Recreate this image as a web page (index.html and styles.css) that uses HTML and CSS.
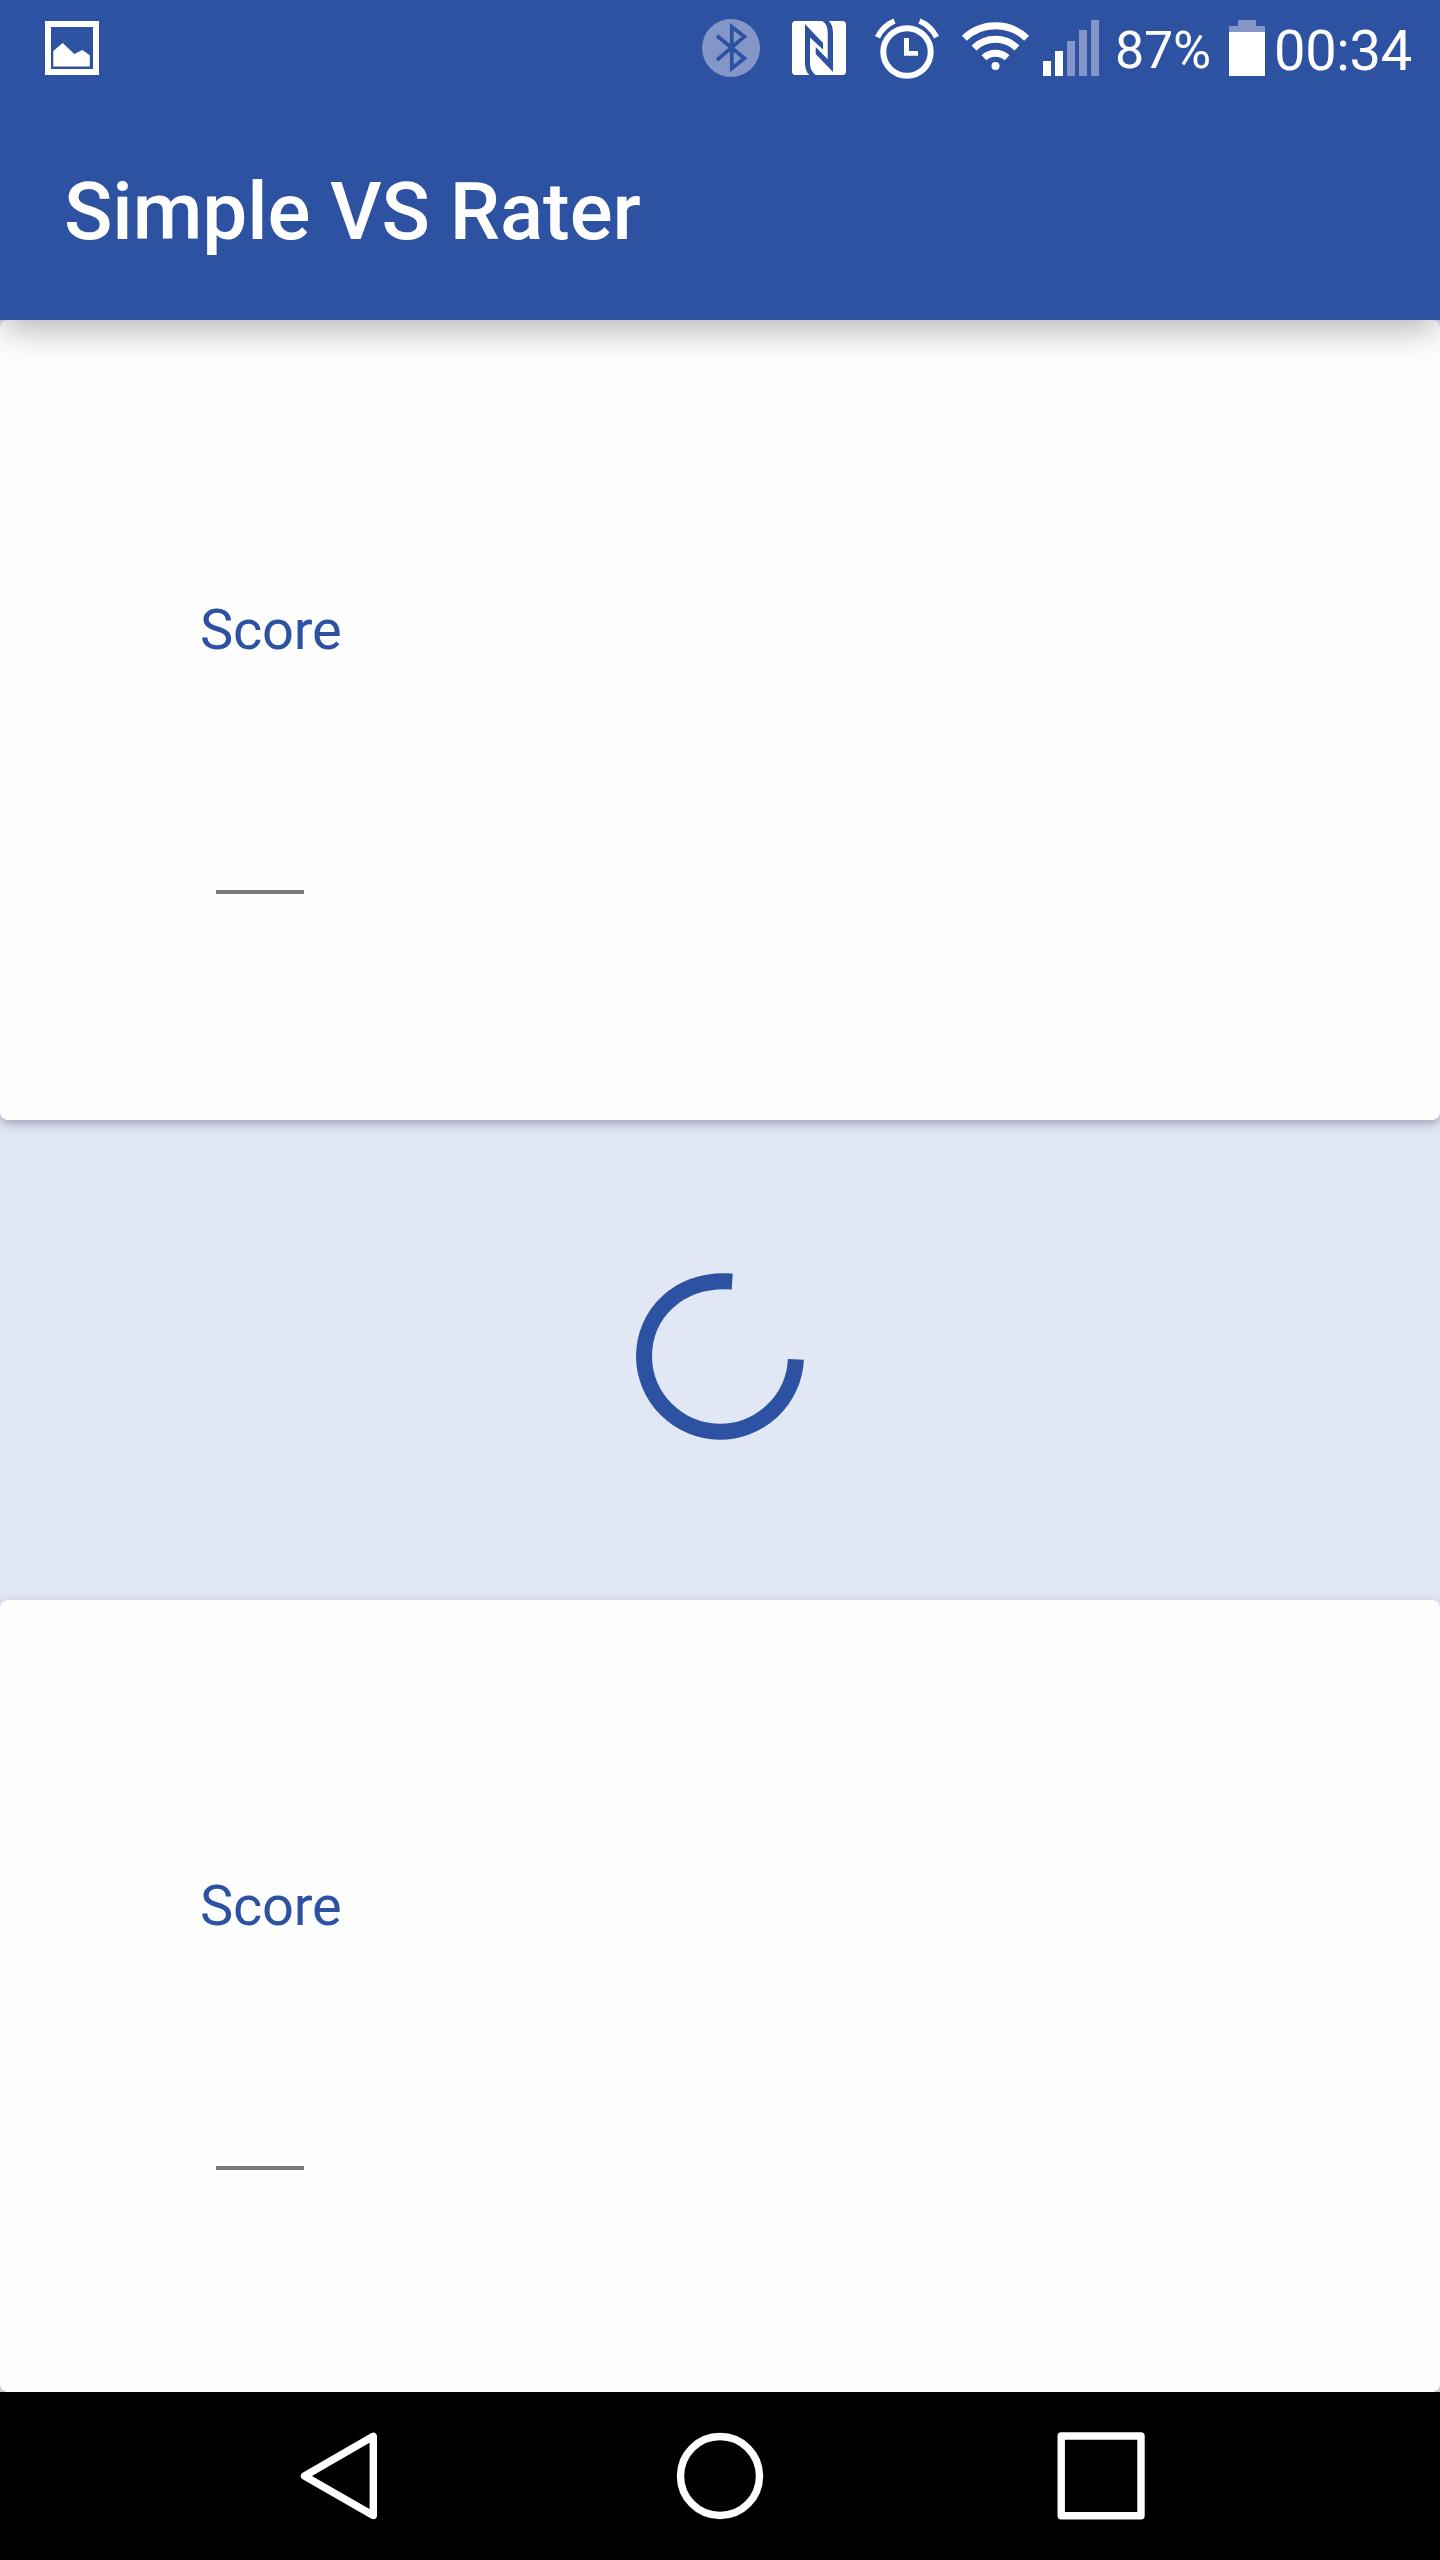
FILE: index.html
```html
<!DOCTYPE html>
<html lang="en">
<head>
<meta charset="utf-8">
<title>Simple VS Rater</title>
<link rel="stylesheet" href="styles.css">
</head>
<body>
<div class="screen">
  <header class="header">
    <div class="status">
      <svg class="status-icon status-picture" viewBox="40 0 64 96"><path d="M48 24H96V72H48Z" fill="none" stroke="#fff" stroke-width="6"/><path d="M53.3 51L62.7 43L74.3 54L82.3 50L89.8 55.3V66.5H53.3Z" fill="#fff"/></svg>
      <svg class="status-icon" viewBox="687 0 88 96"><circle cx="731" cy="48" r="29" fill="#8496c8"/><path d="M717 35.7L744.3 58.2L731.8 68.5V26.8L744.3 36.6L717 60" fill="none" stroke="#2e52a2" stroke-width="3.8"/></svg>
      <svg class="status-icon" viewBox="775 0 88 96"><rect x="792" y="21" width="54" height="54" rx="3.5" fill="#fff"/><path d="M805 24L823 43V49.5L810 37.5V64Q810 71 816 75.2H809.5Q805 71 805 63ZM833 72L815.7 54V47L827.7 59.3V32Q827.7 24 822 20.8H828.6Q833 25 833 33Z" fill="#2e52a2"/></svg>
      <svg class="status-icon" viewBox="863 0 88 96"><g fill="none" stroke="#fff"><circle cx="907" cy="52" r="23.7" stroke-width="6"/><path d="M877.5 37.2A34 34 0 0 1 894.5 21M936.5 37.2A34 34 0 0 0 919.5 21" stroke-width="5.6"/></g><path d="M904 38H909V51H918V55.8H904Z" fill="#fff"/></svg>
      <svg class="status-icon" viewBox="951 0 88 96"><g fill="none" stroke="#fff" stroke-width="7"><path d="M964.3 38.3A45 45 0 0 1 1026.7 38.3"/><path d="M974 48A31 31 0 0 1 1017 48"/><path d="M983.9 57.8A17 17 0 0 1 1007.1 57.8"/></g><circle cx="995.5" cy="66" r="4" fill="#fff"/></svg>
      <svg class="status-icon" viewBox="1039 0 76 96"><path d="M1043 61H1051V76H1043ZM1055 51H1063V76H1055Z" fill="#fff"/><path d="M1067 41H1075V76H1067ZM1079 30H1087V76H1079ZM1091 20H1099V76H1091Z" fill="#8496c8"/></svg>
      <span class="percent">87%</span>
      <svg class="status-icon" viewBox="1221 0 52 96"><path d="M1229 26H1238V20H1256V26H1265V32H1229Z" fill="#8496c8"/><path d="M1229 32H1265V76H1229Z" fill="#fff"/></svg>
      <span class="time">00:34</span>
    </div>
    <h1 class="title">Simple VS Rater</h1>
  </header>
  <main class="content">
    <section class="card">
      <label class="label" for="score-a">Score</label>
      <input class="field" id="score-a">
    </section>
    <div class="progress">
      <svg class="spinner" viewBox="-84 -84 168 168"><path d="M12.2 -75.5C-42 -79 -76 -43 -76 0A76 76 0 0 0 75.9 2.3" fill="none" stroke="#2e52a2" stroke-width="16"/></svg>
    </div>
    <section class="card card-lower">
      <label class="label" for="score-b">Score</label>
      <input class="field" id="score-b">
    </section>
  </main>
  <nav class="nav">
    <svg class="nav-icon" viewBox="280 2392 120 168"><path d="M304.5 2476L373.3 2436.3V2515.5Z"/></svg>
    <svg class="nav-icon" viewBox="660 2392 120 168"><circle cx="720" cy="2476" r="39.5"/></svg>
    <svg class="nav-icon" viewBox="1040 2392 120 168"><rect x="1061.2" y="2436" width="79.8" height="79.8"/></svg>
  </nav>
</div>
</body>
</html>
```
FILE: styles.css
```css
* { box-sizing: border-box; }
body { margin: 0; font-family: Roboto, sans-serif; background: #e1e7f5; }
.screen { width: 1440px; height: 2560px; display: flex; flex-direction: column; overflow: hidden; }
.header {
  height: 320px;
  flex: none;
  position: relative;
  z-index: 1;
  background: #2e52a2;
  color: #fff;
  box-shadow: 0 16px 30px -4px rgba(0, 0, 0, .26);
}
.status { height: 96px; display: flex; padding: 0 27px 0 40px; }
.status-icon { height: 96px; flex: none; }
.status-picture { margin-right: auto; }
.percent { width: 106px; font-size: 52px; line-height: 101px; letter-spacing: -.2px; flex: none; }
.time { width: 140px; padding-left: 1px; font-size: 56px; line-height: 102px; letter-spacing: -.3px; flex: none; }
.title { margin: 0; padding-left: 64px; font-size: 80px; line-height: 232px; font-weight: 500; letter-spacing: -.08px; }
.content { height: 2072px; flex: none; display: flex; flex-direction: column; }
.card {
  height: 800px;
  flex: none;
  padding: 270px 200px 0;
  display: flex;
  flex-direction: column;
  background: #fefefe;
  border-radius: 8px;
  box-shadow: 0 4px 12px rgba(30, 35, 65, .28), 0 2px 4px rgba(30, 35, 65, .1);
}
.card-lower { height: 792px; padding-top: 266px; }
.label { color: #2e52a2; font-size: 56px; line-height: 80px; letter-spacing: -.25px; }
.field {
  width: 88px;
  height: 80px;
  margin: 144px 0 0 16px;
  padding: 0;
  border: 0;
  border-bottom: 4px solid #7b7b7b;
  background: none;
  font: 56px Roboto, sans-serif;
}
.progress { height: 480px; flex: none; display: flex; justify-content: center; padding-top: 152.5px; }
.spinner { width: 168px; height: 168px; overflow: visible; }
.nav { height: 168px; flex: none; position: relative; display: flex; justify-content: center; gap: 260px; background: #000; }
.nav-icon { width: 120px; height: 168px; fill: none; stroke: #fff; stroke-width: 7.4; stroke-linejoin: round; }
```
